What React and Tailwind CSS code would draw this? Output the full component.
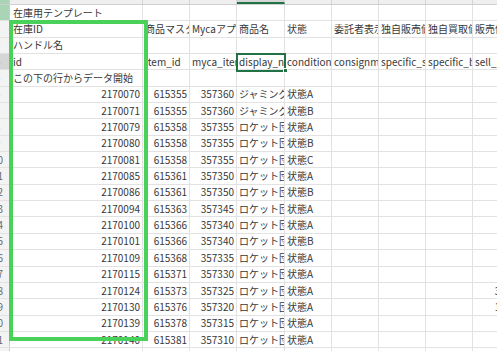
import React from "react";

const W = ["w-[133px]", "w-[47px]", "w-[47px]", "w-[48px]", "w-[47px]", "w-[47px]", "w-[47px]", "w-[47px]", "w-[47px]"];

const data = [
  [2170070, 615355, 357360, "ジャミングタワー", "状態A"],
  [2170071, 615355, 357360, "ジャミングタワー", "状態B"],
  [2170079, 615358, 357355, "ロケット団のアジト", "状態A"],
  [2170080, 615358, 357355, "ロケット団のアジト", "状態B"],
  [2170081, 615358, 357355, "ロケット団のアジト", "状態C"],
  [2170085, 615361, 357350, "ロケット団のアジト", "状態A"],
  [2170086, 615361, 357350, "ロケット団のアジト", "状態B"],
  [2170094, 615363, 357345, "ロケット団のアジト", "状態A"],
  [2170100, 615366, 357340, "ロケット団のアジト", "状態A"],
  [2170101, 615366, 357340, "ロケット団のアジト", "状態B"],
  [2170109, 615368, 357335, "ロケット団のアジト", "状態A"],
  [2170115, 615371, 357330, "ロケット団のアジト", "状態A"],
  [2170124, 615373, 357325, "ロケット団のアジト", "状態A", "", "", "", "3000"],
  [2170130, 615376, 357320, "ロケット団のアジト", "状態A", "", "", "", "1500"],
  [2170139, 615378, 357315, "ロケット団のアジト", "状態A"],
  [2170140, 615381, 357310, "ロケット団のアジト", "状態A"],
];

function RowHead({ n, tone }) {
  const bg = tone === "green" ? "bg-[#a9d5b6]" : tone === "sel" ? "bg-[#d6d6d6]" : "bg-[#f3f3f3]";
  return (
    <div className={`w-[10px] shrink-0 h-full overflow-hidden border-r border-[#cdcdcd] flex justify-end ${bg}`}>
      <div className="w-[27px] shrink-0 h-full mr-[-2px] flex items-center justify-center text-[10px] text-[#6a6a6a]">
        {n}
      </div>
    </div>
  );
}

function Row({ n, cells = [], tone }) {
  return (
    <div className="flex h-[16.35px] border-b border-[#e2e2e2]">
      <RowHead n={n} tone={tone} />
      {W.map((w, i) => {
        const v = cells[i];
        const isNum = typeof v === "number" || (typeof v === "string" && /^\d+$/.test(v));
        return (
          <div
            key={i}
            className={`${w} shrink-0 h-full border-r border-[#e2e2e2] overflow-hidden whitespace-nowrap flex items-center ${
              isNum ? "justify-end pr-[2px]" : i === 0 ? "pl-[3px]" : "pl-[2px]"
            }`}
          >
            {v === undefined || v === "" ? null : String(v)}
          </div>
        );
      })}
    </div>
  );
}

export default function App() {
  return (
    <div
      className="relative w-[502px] h-[351px] bg-white overflow-hidden text-[10px] leading-none text-[#383838]"
      style={{ fontFamily: '"Noto Sans CJK JP", "Noto Sans", sans-serif' }}
    >
      <div className="relative w-[497px] h-[351px] overflow-hidden">
        <div className="flex h-[5px] bg-[#efefef] border-b border-[#cfcfcf]">
          <div className="w-[10px] shrink-0 h-full bg-[#a9d5b6] border-r border-[#cdcdcd]" />
          {W.map((w, i) => (
            <div
              key={i}
              className={`${w} shrink-0 h-full border-r border-[#d4d4d4] ${
                i === 3 ? "bg-[#d6d6d6] border-b-2 border-b-[#217346]" : ""
              }`}
            />
          ))}
        </div>
        <Row n={1} tone="green" cells={["在庫用テンプレート"]} />
        <Row
          n={2}
          cells={["在庫ID", "商品マスタID", "MycaアプリID", "商品名", "状態", "委託者表示名", "独自販売価格", "独自買取価格", "販売価格"]}
        />
        <Row n={3} cells={["ハンドル名"]} />
        <Row
          n={4}
          tone="sel"
          cells={["id", "item_id", "myca_item_id", "display_name", "condition_option", "consignment_name", "specific_sell_price", "specific_buy_price", "sell_price"]}
        />
        <Row n={5} cells={["この下の行からデータ開始"]} />
        {data.map((r, i) => (
          <Row key={i} n={6 + i} cells={r} />
        ))}
        <Row n={22} cells={[]} />

        <div className="absolute left-[236px] top-[53px] w-[50px] h-[19px] border-2 border-[#217346]" />
        <div className="absolute left-[283px] top-[68px] w-[5px] h-[5px] bg-[#217346] border border-white" />
      </div>

      <div className="absolute left-[9px] top-[20px] w-[139px] h-[321px] border-4 border-[#4ad15a]" />
    </div>
  );
}
